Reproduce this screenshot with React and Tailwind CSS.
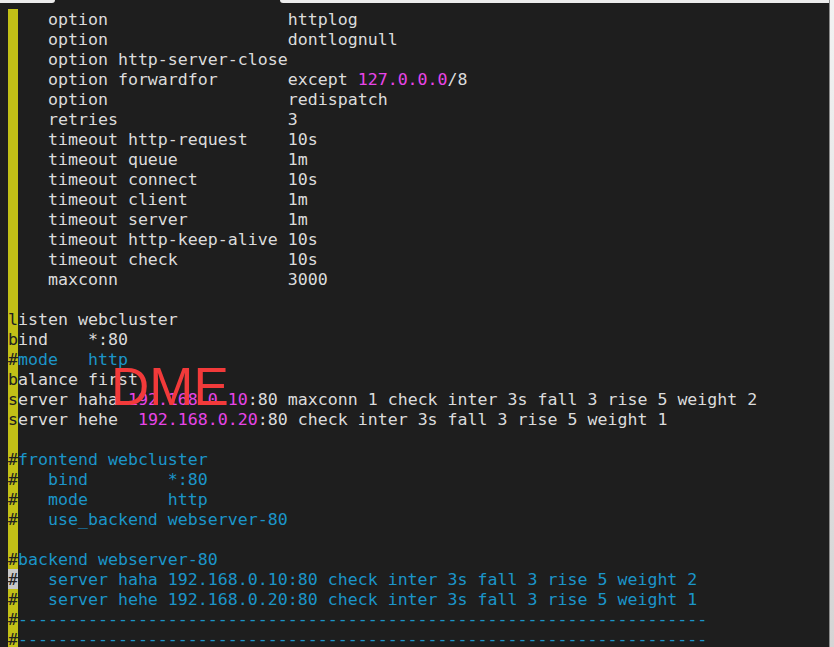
import React from "react";

const W = "#dcdcdc";
const C = "#1b95c9";
const M = "#e845e8";

const lines = [
  [["    option                  httplog", W]],
  [["    option                  dontlognull", W]],
  [["    option http-server-close", W]],
  [["    option forwardfor       except ", W], ["127.0.0.0", M], ["/8", W]],
  [["    option                  redispatch", W]],
  [["    retries                 3", W]],
  [["    timeout http-request    10s", W]],
  [["    timeout queue           1m", W]],
  [["    timeout connect         10s", W]],
  [["    timeout client          1m", W]],
  [["    timeout server          1m", W]],
  [["    timeout http-keep-alive 10s", W]],
  [["    timeout check           10s", W]],
  [["    maxconn                 3000", W]],
  [],
  [["listen webcluster", W]],
  [["bind    *:80", W]],
  [["#", W], ["mode   http", C]],
  [["balance first", W]],
  [["server haha ", W], ["192.168.0.10", M], [":80 maxconn 1 check inter 3s fall 3 rise 5 weight 2", W]],
  [["server hehe  ", W], ["192.168.0.20", M], [":80 check inter 3s fall 3 rise 5 weight 1", W]],
  [],
  [["#frontend webcluster", C]],
  [["#   bind        *:80", C]],
  [["#   mode        http", C]],
  [["#   use_backend webserver-80", C]],
  [],
  [["#backend webserver-80", C]],
  [["#   server haha 192.168.0.10:80 check inter 3s fall 3 rise 5 weight 2", C]],
  [["#   server hehe 192.168.0.20:80 check inter 3s fall 3 rise 5 weight 1", C]],
  [["#" + "-".repeat(69), C]],
  [["#" + "-".repeat(69), C]],
];

function Row({ segs, cursor }) {
  let first = "\u00a0";
  const rest = [];
  segs.forEach((s, i) => {
    let t = s[0];
    if (i === 0) {
      first = t[0] === " " ? "\u00a0" : t[0];
      t = t.slice(1);
    }
    if (t.length) rest.push([t, s[1]]);
  });
  return (
    <div className="flex h-[20px] items-stretch pl-[8px] whitespace-pre">
      <span
        className={
          "w-[10px] h-[20px] pt-[1px] shrink-0 text-[#202020] " +
          (cursor ? "bg-[#c8c8c8]" : "bg-[#c2c017]")
        }
      >
        {first}
      </span>
      <span className="pt-[1px]">
        {rest.map((s, i) => (
          <span key={i} style={{ color: s[1] }}>
            {s[0]}
          </span>
        ))}
      </span>
    </div>
  );
}

export default function App() {
  return (
    <div className="w-[834px] h-[647px] bg-[#1e1e1e] flex overflow-hidden relative">
      <div className="flex-1 flex flex-col">
        <div className="h-[3px] flex shrink-0">
          <div className="w-[55px] bg-[#ececec] rounded-br-[3px]" />
          <div className="w-[225px]" />
          <div className="flex-1 bg-[#ececec] rounded-bl-[3px]" />
        </div>
        <div
          className="pt-[6px] text-[16.6px] leading-[19px]"
          style={{ fontFamily: '"DejaVu Sans Mono", monospace' }}
        >
          {lines.map((segs, i) => (
            <Row key={i} segs={segs} cursor={i === 28} />
          ))}
        </div>
      </div>
      <div className="w-[1px] bg-[#8a8a8a]" />
      <div className="w-[4px] bg-gradient-to-b from-[#f2f2f2] to-[#d4d4d4]" />
      <div
        className="absolute left-[111px] top-[360px] text-[53px] leading-none text-[#f23a3a]"
        style={{ fontFamily: '"Liberation Sans", Arial, sans-serif' }}
      >
        DME
      </div>
    </div>
  );
}
